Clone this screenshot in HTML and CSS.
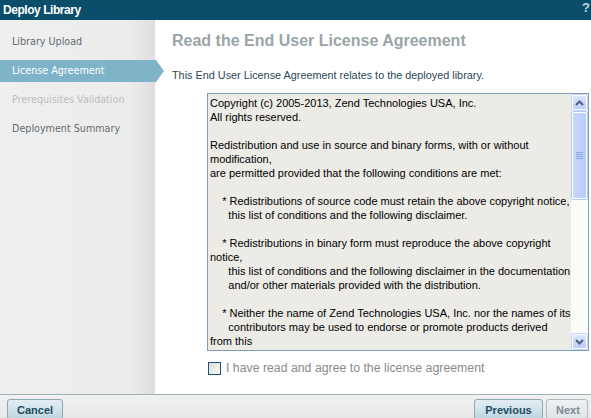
FILE: index.html
```
<!DOCTYPE html>
<html>
<head>
<meta charset="utf-8">
<link rel="stylesheet" href="styles.css">
</head>
<body>
<div class="app">
  <div class="header">
    <span class="title">Deploy Library</span>
    <span class="help">?</span>
  </div>
  <div class="content">
    <div class="sidebar">
      <div class="nav-item">Library Upload</div>
      <div class="nav-item active">License Agreement</div>
      <div class="nav-item disabled">Prerequisites Validation</div>
      <div class="nav-item">Deployment Summary</div>
    </div>
    <div class="main">
      <h1 class="heading">Read the End User License Agreement</h1>
      <p class="intro">This End User License Agreement relates to the deployed library.</p>
      <div class="license">
        <div class="license-text">Copyright (c) 2005-2013, Zend Technologies USA, Inc.
All rights reserved.

Redistribution and use in source and binary forms, with or without
modification,
are permitted provided that the following conditions are met:

    * Redistributions of source code must retain the above copyright notice,
      this list of conditions and the following disclaimer.

    * Redistributions in binary form must reproduce the above copyright
notice,
      this list of conditions and the following disclaimer in the documentation
      and/or other materials provided with the distribution.

    * Neither the name of Zend Technologies USA, Inc. nor the names of its
      contributors may be used to endorse or promote products derived
from this</div>
        <div class="scrollbar">
          <div class="sb-btn">
            <svg width="9" height="6" viewBox="0 0 9 6"><path d="M1 5 L4.5 1.5 L8 5" fill="none" stroke="#4d6185" stroke-width="2"/></svg>
          </div>
          <div class="sb-track">
            <div class="sb-thumb"><span class="grip"></span></div>
          </div>
          <div class="sb-btn">
            <svg width="9" height="6" viewBox="0 0 9 6"><path d="M1 1 L4.5 4.5 L8 1" fill="none" stroke="#4d6185" stroke-width="2"/></svg>
          </div>
        </div>
      </div>
      <label class="agree"><span class="checkbox"></span>I have read and agree to the license agreement</label>
    </div>
  </div>
  <div class="footer">
    <button class="btn">Cancel</button>
    <div class="footer-right">
      <button class="btn">Previous</button>
      <button class="btn disabled">Next</button>
    </div>
  </div>
</div>
</body>
</html>
```
FILE: styles.css
```
* { box-sizing: border-box; }
html, body { margin: 0; padding: 0; }
body {
  width: 591px;
  height: 418px;
  overflow: hidden;
  font-family: "Liberation Sans", Arial, sans-serif;
  background: #fff;
}
.app { display: flex; flex-direction: column; height: 418px; }
.header {
  height: 20px;
  flex: none;
  background: #0a4e6a;
  display: flex;
  align-items: center;
  justify-content: space-between;
  padding-left: 3px;
  overflow: hidden;
}
.title {
  color: #fff;
  font-weight: bold;
  font-size: 12px;
  letter-spacing: -0.45px;
}
.help {
  color: #c9d8df;
  font-weight: bold;
  font-size: 13px;
  margin-right: 1px;
  margin-top: -5px;
}
.content {
  height: 374px;
  flex: none;
  display: flex;
}
.sidebar {
  width: 155px;
  flex: none;
  background: linear-gradient(to right, #efefef 0, #ececec 130px, #dedede 155px);
  padding-top: 11px;
  display: flex;
  flex-direction: column;
  gap: 7px;
}
.nav-item {
  height: 22px;
  line-height: 22px;
  padding-left: 12px;
  font-family: "DejaVu Sans", Verdana, sans-serif;
  font-size: 9.6px;
  color: #5f6c73;
  position: relative;
}
.nav-item.active {
  background: #7fb3c8;
  color: #fff;
  margin-right: -1px;
}
.nav-item.active::after {
  content: "";
  position: absolute;
  right: -8px;
  top: 0;
  border-left: 8px solid #7fb3c8;
  border-top: 11px solid transparent;
  border-bottom: 11px solid transparent;
}
.nav-item.disabled { color: #b9bdc0; }
.main {
  flex: 1;
  padding-left: 17px;
  padding-top: 11px;
}
.heading {
  margin: 0;
  font-size: 16px;
  line-height: 19px;
  font-weight: bold;
  color: #9aa5a9;
}
.intro {
  margin: 18px 0 0 0;
  font-size: 10.85px;
  line-height: 14px;
  color: #2c4857;
}
.license {
  margin: 11px 0 0 35px;
  width: 382px;
  height: 258px;
  border: 1px solid #7f9db9;
  background: #ecebe6;
  display: flex;
}
.license-text {
  flex: 1;
  overflow: hidden;
  white-space: pre;
  font-size: 11px;
  line-height: 14px;
  color: #000;
  padding: 2px 0 0 2px;
}
.scrollbar {
  width: 17px;
  flex: none;
  background: #fbfbf8;
  display: flex;
  flex-direction: column;
  padding: 1px 1px 1px 1px;
}
.sb-btn {
  height: 15px;
  flex: none;
  border: 1px solid #fff;
  border-radius: 2px;
  background: linear-gradient(to bottom, #dce6fd, #bccefa);
  box-shadow: 0 0 0 1px #c3d3fd;
  display: flex;
  align-items: center;
  justify-content: center;
}
.sb-track { flex: 1; padding: 2px 0 0 0; }
.sb-thumb {
  height: 87px;
  border: 1px solid #fff;
  border-radius: 2px;
  background: linear-gradient(to right, #c7d8fd, #b8cbf9);
  box-shadow: 0 0 0 1px #b5c8f5;
  display: flex;
  align-items: center;
  justify-content: center;
}
.grip {
  width: 7px;
  height: 7px;
  background: repeating-linear-gradient(to bottom, #8fa8e6 0 1px, transparent 1px 2px);
}
.agree {
  display: flex;
  align-items: center;
  margin: 10px 0 0 36px;
  font-size: 12.3px;
  color: #8a8a8a;
  height: 14px;
}
.checkbox {
  width: 13px;
  height: 13px;
  border: 1px solid #1c5180;
  background: linear-gradient(135deg, #dcdcd7, #fbfbf9);
  margin-right: 5px;
}
.footer {
  height: 24px;
  flex: none;
  border-top: 1px solid #a0b1b6;
  background: linear-gradient(to bottom, #f1f1f1, #e8e8e8);
  display: flex;
  justify-content: space-between;
  padding: 4px 3px 0 7px;
}
.footer-right { display: flex; gap: 3px; }
.btn {
  height: 21px;
  padding: 0 9px;
  font-family: "Liberation Sans", Arial, sans-serif;
  font-weight: bold;
  font-size: 11px;
  color: #1f4a5f;
  background: linear-gradient(to bottom, #e3eef3, #bcd5e1);
  border: 1px solid #8ea8b4;
  border-radius: 3px;
}
.btn:first-child { width: 56px; }
.footer-right .btn:first-child { width: 69px; }
.btn.disabled {
  width: 42px;
  color: #7d8a90;
  background: linear-gradient(to bottom, #eef2f3, #dde5e8);
  border-color: #aebbc0;
}
```
